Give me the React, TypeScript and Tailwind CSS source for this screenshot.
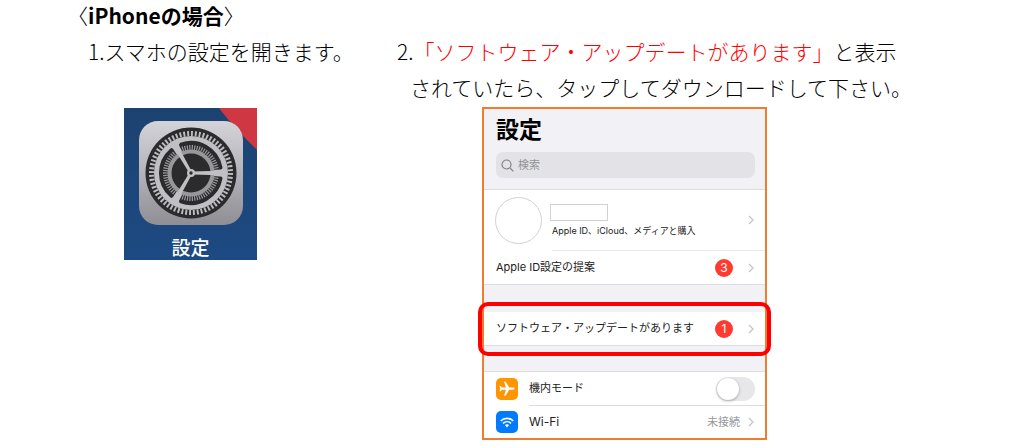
import type { ReactNode } from "react";

function Chevron() {
  return (
    <svg width="6" height="10" viewBox="0 0 6 10" fill="none" className="shrink-0">
      <path d="M1 1l4 4-4 4" stroke="#c4c4c8" strokeWidth="1.3" />
    </svg>
  );
}

function Badge({ children }: { children: ReactNode }) {
  return (
    <span className="flex size-[18px] shrink-0 items-center justify-center rounded-full bg-[#ff3b30] text-xs text-white">
      {children}
    </span>
  );
}

function GearIcon() {
  return (
    <svg viewBox="-52 -52 104 104" className="size-[104px]">
      <defs>
        <linearGradient id="plate" x1="0" y1="0" x2="0" y2="1">
          <stop offset="0" stopColor="#d3d3d8" />
          <stop offset="0.5" stopColor="#b4b3b9" />
          <stop offset="1" stopColor="#8f8e95" />
        </linearGradient>
      </defs>
      <rect x="-52" y="-52" width="104" height="104" rx="19" fill="url(#plate)" />
      <circle r="45.5" fill="#2b2b2e" />
      <circle
        r="39.5"
        fill="none"
        stroke="#bdbdc1"
        strokeWidth="5"
        pathLength="128"
        strokeDasharray="1 1"
      />
      <circle r="37" fill="#c0c0c4" />
      {[0, 120, 240].map((angle) => (
        <g key={angle} transform={`rotate(${angle})`}>
          <path
            d="M29.5 5.5A30 30 0 0 1 -10 28.3L-5.8 20.2A21 21 0 0 0 20.4 5.1Z"
            fill="#2b2b2e"
            stroke="#2b2b2e"
            strokeWidth="4"
            strokeLinejoin="round"
          />
          <path
            d="M25.1 4.4A25.5 25.5 0 0 1 -8.7 24"
            fill="none"
            stroke="#98989c"
            strokeWidth="5"
            pathLength="37"
            strokeDasharray="1 1"
          />
        </g>
      ))}
      <circle r="23.5" fill="#98989c" />
      <circle r="19.5" fill="#2b2b2e" />
      {[0, 120, 240].map((angle) => (
        <path
          key={angle}
          transform={`rotate(${angle})`}
          d="M0 -1.4L20 -2L30 -2.6V2.6L20 2L0 1.4Z"
          fill="#c0c0c4"
        />
      ))}
      <circle r="4" fill="#c0c0c4" />
      <circle r="1.7" fill="#2b2b2e" />
    </svg>
  );
}

function HomeScreenTile() {
  return (
    <figure className="relative flex h-[152px] w-[133px] flex-col items-center overflow-hidden bg-gradient-to-b from-[#1c4270] to-[#1d4a83] pt-[13px]">
      <svg viewBox="0 0 38 42" className="absolute top-0 right-0 h-[42px] w-[38px]">
        <path d="M0 0H38V42C27 31 12 16 0 0Z" fill="#cf3742" />
      </svg>
      <div className="relative">
        <GearIcon />
      </div>
      <figcaption className="mt-2.5 text-[19px] leading-6 font-medium text-white">設定</figcaption>
    </figure>
  );
}

function PhoneSettings() {
  return (
    <div className="w-full max-w-[285px] border-2 border-[#ed7d31] bg-[#f2f1f6] font-[Inter,'Noto_Sans_CJK_JP',sans-serif] text-[11px] text-[#222]">
      <div className="border-b border-[#dddde0] px-3 pt-[7px] pb-[11px]">
        <h2 className="text-[23px] leading-7 font-bold text-black">設定</h2>
        <label className="-mr-0.5 mt-2 flex h-[26px] items-center gap-1 rounded-[7px] bg-[#e3e2e7] px-[5px]">
          <svg width="13" height="13" viewBox="0 0 13 13" fill="none" stroke="#85858a" strokeWidth="1.2">
            <circle cx="5.5" cy="5.5" r="4.5" />
            <path d="M9 9l3.4 3.4" />
          </svg>
          <input
            type="text"
            aria-label="検索"
            placeholder="検索"
            className="min-w-0 flex-1 bg-transparent outline-none placeholder:text-[#929297]"
          />
        </label>
      </div>

      <div className="border-b border-[#dddde0] bg-white">
        <button type="button" className="flex h-[60px] w-full items-center pr-[11px] pl-[11px] text-left">
          <span className="size-[47px] shrink-0 rounded-full border border-[#d2d2d2]" />
          <span className="ml-2 flex-1">
            <span className="block h-[17px] w-[58px] border border-[#d2d2d2]" />
            <span className="mt-1 block pl-0.5 text-[9px] leading-3 whitespace-nowrap">
              Apple ID、iCloud、メディアと購入
            </span>
          </span>
          <Chevron />
        </button>
        <div className="ml-[68px] h-px bg-[#ececee]" />
        <button type="button" className="flex h-[33px] w-full items-center pr-[11px] pl-3 text-left">
          <span className="flex-1">Apple ID設定の提案</span>
          <Badge>3</Badge>
          <span className="ml-[15px]">
            <Chevron />
          </span>
        </button>
      </div>

      <div className="relative mt-[27px] border-b border-[#dddde0] bg-white">
        <button type="button" className="flex h-[33px] w-full items-center pr-[11px] pl-3 text-left">
          <span className="flex-1 whitespace-nowrap">ソフトウェア・アップデートがあります</span>
          <Badge>1</Badge>
          <span className="ml-[15px]">
            <Chevron />
          </span>
        </button>
        <div className="pointer-events-none absolute -inset-x-1.5 -top-2.5 -bottom-[11px] rounded-[10px] border-4 border-[#ff0000]" />
      </div>

      <div className="mt-[25px] border-t border-[#dddde0] bg-white pl-3">
        <label className="flex h-[33px] items-center">
          <span className="flex size-[22px] items-center justify-center rounded-[5px] bg-[#ff9500]">
            <svg width="18" height="18" viewBox="0 0 24 24" fill="white" className="rotate-90">
              <path d="M21 16v-2l-8-5V3.5a1.5 1.5 0 0 0-3 0V9l-8 5v2l8-2.500V19l-2 1.500V22l3.500-1 3.500 1v-1.500L13 19v-5.500l8 2.500z" />
            </svg>
          </span>
          <span className="ml-[11px] flex-1">機内モード</span>
          <input
            type="checkbox"
            role="switch"
            className="mr-2.5 flex h-6 w-[39px] appearance-none items-center rounded-full bg-[#e7e7e9] px-px before:size-[22px] before:rounded-full before:bg-white before:shadow-[0_1px_3px_rgba(0,0,0,0.3)] checked:justify-end checked:bg-[#34c759]"
          />
        </label>
        <div className="ml-[33px] h-px bg-[#dddde0]" />
        <button type="button" className="flex h-8 w-full items-center pr-[11px] text-left">
          <span className="flex size-[22px] items-center justify-center rounded-[5px] bg-[#007aff]">
            <svg width="14" height="11" viewBox="0 0 14 11" fill="none" stroke="white" strokeWidth="1.6">
              <path d="M0.700 4C4.200 0.500 9.800 0.500 13.300 4" />
              <path d="M3 6.300C5.300 4.200 8.700 4.200 11 6.300" />
              <path d="M4.900 8.100C6.100 7 7.900 7 9.100 8.100L7 10.500Z" fill="white" stroke="none" />
            </svg>
          </span>
          <span className="ml-[11px] flex-1 text-xs">Wi-Fi</span>
          <span className="mr-2 text-[#98989d]">未接続</span>
          <Chevron />
        </button>
      </div>
    </div>
  );
}

export default function App() {
  return (
    <main className="bg-white pl-[67px] font-['Noto_Sans_CJK_JP',sans-serif] text-[21px] text-black">
      <h1 className="pb-[3px] leading-[30px] font-bold">
        <span className="font-light">〈</span>iPhoneの場合<span className="font-light">〉</span>
      </h1>
      <div className="flex items-start pl-[21px]">
        <section className="w-[309px] shrink-0">
          <p className="leading-9 font-light">1.スマホの設定を開きます。</p>
          <div className="mt-[39px] ml-9">
            <HomeScreenTile />
          </div>
        </section>
        <section className="flex-1">
          <p className="leading-9 font-light">
            2.<span className="text-[#ff0000]">「ソフトウェア・アップデートがあります」</span>と表示
            <span className="block pl-[13px]">されていたら、タップしてダウンロードして下さい。</span>
          </p>
          <div className="mt-0.5 ml-[85px]">
            <PhoneSettings />
          </div>
        </section>
      </div>
    </main>
  );
}
